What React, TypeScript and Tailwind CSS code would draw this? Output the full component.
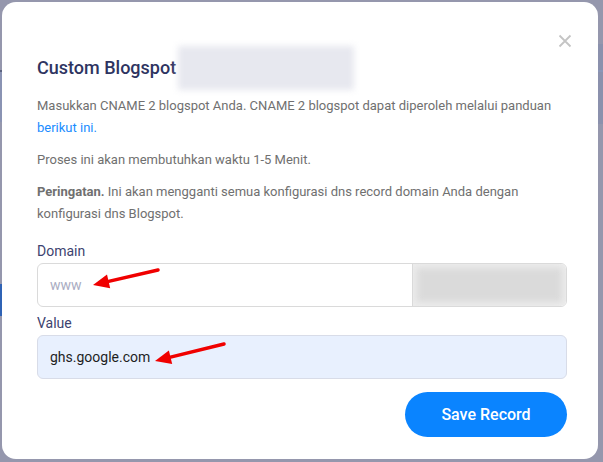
import React from "react";

function Arrow({ x1, y1, x2, y2 }: { x1: number; y1: number; x2: number; y2: number }) {
  const ang = Math.atan2(y2 - y1, x2 - x1);
  const len = 16;
  const w = 7;
  const bx = x2 - len * Math.cos(ang);
  const by = y2 - len * Math.sin(ang);
  const px = -Math.sin(ang) * w;
  const py = Math.cos(ang) * w;
  return (
    <g>
      <line x1={x1} y1={y1} x2={bx} y2={by} stroke="#f00000" strokeWidth={3.5} strokeLinecap="round" />
      <polygon points={`${x2},${y2} ${bx + px},${by + py} ${bx - px},${by - py}`} fill="#f00000" />
    </g>
  );
}

export default function App() {
  return (
    <div
      className="relative w-[603px] h-[462px] overflow-hidden bg-[#9597ad] pt-[2px] pl-[2px]"
      style={{ fontFamily: "Roboto, 'Noto Sans', sans-serif" }}
    >
      {/* background page hints */}
      <div className="absolute left-0 top-[70px] w-[4px] h-[2px] bg-[#5c6380]" />
      <div className="absolute left-0 top-[72px] w-[3px] h-[50px] bg-[#8a93b3]" />
      <div className="absolute left-0 top-[284px] w-[3px] h-[32px] bg-[#2f63b5]" />
      <div className="absolute right-0 top-[44px] w-[5px] h-[80px] bg-[#8b91ad]" />
      <div className="absolute right-0 top-[70px] w-[5px] h-[2px] bg-[#8a96b8]" />

      <div className="relative w-[596px] h-[457px] rounded-[14px] bg-white pl-[35px] pr-[31px] pt-[44px]">
        <button className="absolute right-[26px] top-[32px] w-[14px] h-[14px] text-[#c4c4c4]">
          <svg viewBox="0 0 14 14" className="w-[14px] h-[14px]">
            <path d="M1.5 1.5 L12.5 12.5 M12.5 1.5 L1.5 12.5" stroke="currentColor" strokeWidth="1.8" />
          </svg>
        </button>

        <div className="flex items-center h-[44px]">
          <h2 className="text-[18px] font-medium text-[#2e3461] leading-[26px]">Custom Blogspot</h2>
          <div className="ml-[2px] w-[176px] h-[44px] bg-[#e7e8ef] blur-[3px]" />
        </div>

        <p className="mt-[5px] text-[13px] leading-[22px] text-[#707070]">
          Masukkan CNAME 2 blogspot Anda. CNAME 2 blogspot dapat diperoleh melalui panduan{" "}
          <br />
          <a className="text-[#1a8cff]">berikut ini.</a>
        </p>
        <p className="mt-[10px] text-[13px] leading-[22px] text-[#707070]">
          Proses ini akan membutuhkan waktu 1-5 Menit.
        </p>
        <p className="mt-[10px] text-[13px] leading-[22px] text-[#707070]">
          <span className="font-bold">Peringatan.</span> Ini akan mengganti semua konfigurasi dns record domain Anda dengan
          <br />
          konfigurasi dns Blogspot.
        </p>

        <div className="mt-[16px] text-[14px] leading-[20px] text-[#3d4370]">Domain</div>
        <div className="mt-[2px] flex h-[44px] rounded-[6px] border border-[#dadada] overflow-hidden">
          <div className="flex-1 flex items-center pl-[12px] text-[14px] text-[#a9acc2]">www</div>
          <div className="w-[154px] bg-[#ececec] border-l border-[#dadada] p-[4px] overflow-hidden">
            <div className="w-full h-full bg-[#dadada] blur-[3px]" />
          </div>
        </div>

        <div className="mt-[6px] text-[14px] leading-[20px] text-[#3d4370]">Value</div>
        <div className="mt-[2px] flex items-center h-[44px] rounded-[6px] border border-[#d8dce8] bg-[#e8f0fe] pl-[12px] text-[14px] text-[#1e1e1e]">
          ghs.google.com
        </div>

        <div className="mt-[13px] flex justify-end">
          <button className="w-[162px] h-[45px] rounded-full bg-[#0a84ff] text-white text-[16px] font-medium">
            Save Record
          </button>
        </div>
      </div>

      <svg className="absolute inset-0 pointer-events-none" width={603} height={462}>
        <Arrow x1={158} y1={270} x2={93} y2={285} />
        <Arrow x1={224} y1={344} x2={155} y2={361} />
      </svg>
    </div>
  );
}
